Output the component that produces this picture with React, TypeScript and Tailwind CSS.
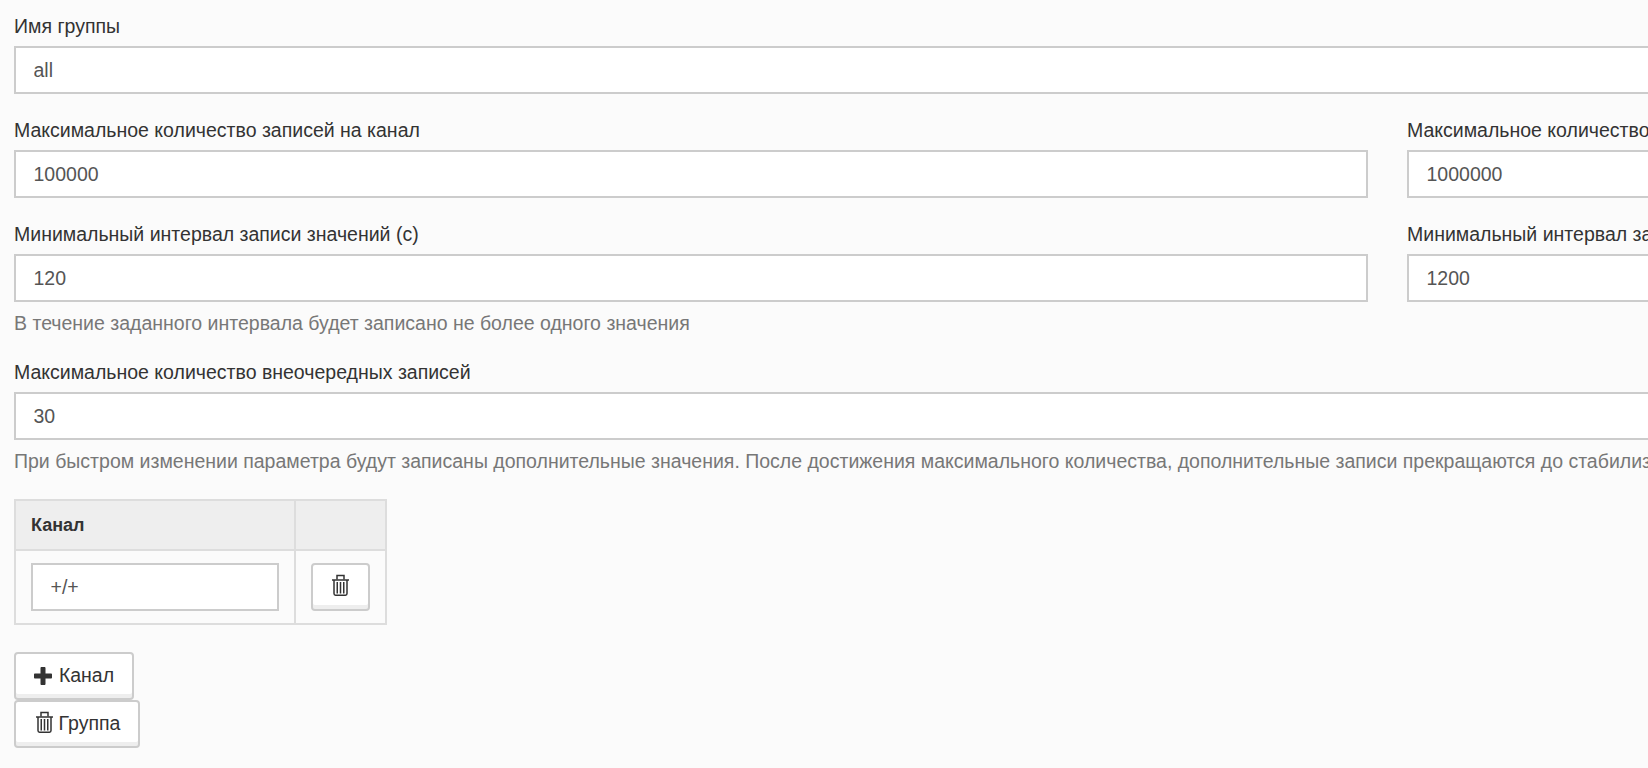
const font = "font-['Liberation_Sans',Arial,sans-serif]";

function TrashIcon({ className }: { className?: string }) {
  return (
    <svg viewBox="0 0 17 22" className={className} fill="none" stroke="#333" strokeWidth="1.5">
      <path d="M0 6h17" />
      <path d="M5 5.500V1.500h7v4" />
      <path d="M2 6v13.500c0 1 .6 1.700 1.500 1.700h10c.9 0 1.500-.7 1.500-1.700V6" />
      <path d="M5.250 8v11.500M8.500 8v11.500M11.750 8v11.500" strokeWidth="1.500" />
    </svg>
  );
}

function PlusIcon() {
  return (
    <svg viewBox="0 0 18 18" className="h-[18px] w-[18px]" fill="#333">
      <path d="M6.500 1c0-.5.4-1 1-1h3c.6 0 1 .5 1 1v5.500H17c.5 0 1 .4 1 1v3c0 .6-.5 1-1 1h-5.500V17c0 .5-.4 1-1 1h-3c-.6 0-1-.5-1-1v-5.500H1c-.5 0-1-.4-1-1v-3c0-.6.5-1 1-1h5.500z" />
    </svg>
  );
}

function Field({ label, value, help, className }: { label: string; value: string; help?: string; className?: string }) {
  return (
    <div className={className}>
      <label className="block h-[33px] text-[19.500px] leading-[26px] text-[#333] whitespace-nowrap">{label}</label>
      <input
        readOnly
        value={value}
        className="block h-[48px] w-full border-2 border-[#ccc] bg-white pl-[17.500px] pr-[18px] text-[19.500px] text-[#555] outline-none"
      />
      {help && <p className="mt-[9px] h-[25px] text-[19.500px] leading-[24px] text-[#777] whitespace-nowrap">{help}</p>}
    </div>
  );
}

const buttonClass =
  "flex h-[48px] items-center justify-center rounded-[4px] border-2 border-[#ccc] bg-white text-[19.500px] text-[#333] shadow-[inset_0_-4px_0_#eee]";

export default function App() {
  return (
    <div className={`h-screen overflow-hidden bg-[#fbfbfb] ${font}`}>
      <div className="w-[2761px] pl-[14px] pt-[13px]">
        <Field label="Имя группы" value="all" />
        <div className="mt-[23px] grid grid-cols-2 gap-x-[39px]">
          <Field label="Максимальное количество записей на канал" value="100000" />
          <Field label="Максимальное количество записей на группу" value="1000000" />
        </div>
        <div className="mt-[23px] grid grid-cols-2 gap-x-[39px]">
          <Field
            label="Минимальный интервал записи значений (с)"
            value="120"
            help="В течение заданного интервала будет записано не более одного значения"
          />
          <Field label="Минимальный интервал записи значений (с)" value="1200" />
        </div>
        <Field
          className="mt-[23px]"
          label="Максимальное количество внеочередных записей"
          value="30"
          help="При быстром изменении параметра будут записаны дополнительные значения. После достижения максимального количества, дополнительные записи прекращаются до стабилизации значения"
        />
        <table className="mt-[25px] w-[373px] border-collapse border-2 border-[#ddd] text-[18px]">
          <thead>
            <tr className="h-[50px] bg-[#eee]">
              <th className="border-2 border-[#ddd] px-[15px] text-left text-[18px] font-bold text-[#333]">Канал</th>
              <th className="w-[91px] border-2 border-[#ddd]"></th>
            </tr>
          </thead>
          <tbody>
            <tr className="h-[74px]">
              <td className="border-2 border-[#ddd] px-[15px]">
                <input
                  readOnly
                  value="+/+"
                  className="block h-[48px] w-full border-2 border-[#ccc] bg-white pl-[17.500px] pr-[18px] text-[19.500px] text-[#555] outline-none"
                />
              </td>
              <td className="border-2 border-[#ddd] px-[15px]">
                <button className={`${buttonClass} w-[59px] pb-[4px]`}>
                  <TrashIcon className="h-[22px] w-[17px]" />
                </button>
              </td>
            </tr>
          </tbody>
        </table>
        <div className="mt-[27px] flex flex-col items-start">
          <button className={`${buttonClass} w-[120px] gap-[7px]`}>
            <PlusIcon />
            Канал
          </button>
          <button className={`${buttonClass} w-[126px] gap-[6px] pl-[2px]`}>
            <TrashIcon className="mb-[4px] h-[22px] w-[17px]" />
            Группа
          </button>
        </div>
      </div>
    </div>
  );
}
